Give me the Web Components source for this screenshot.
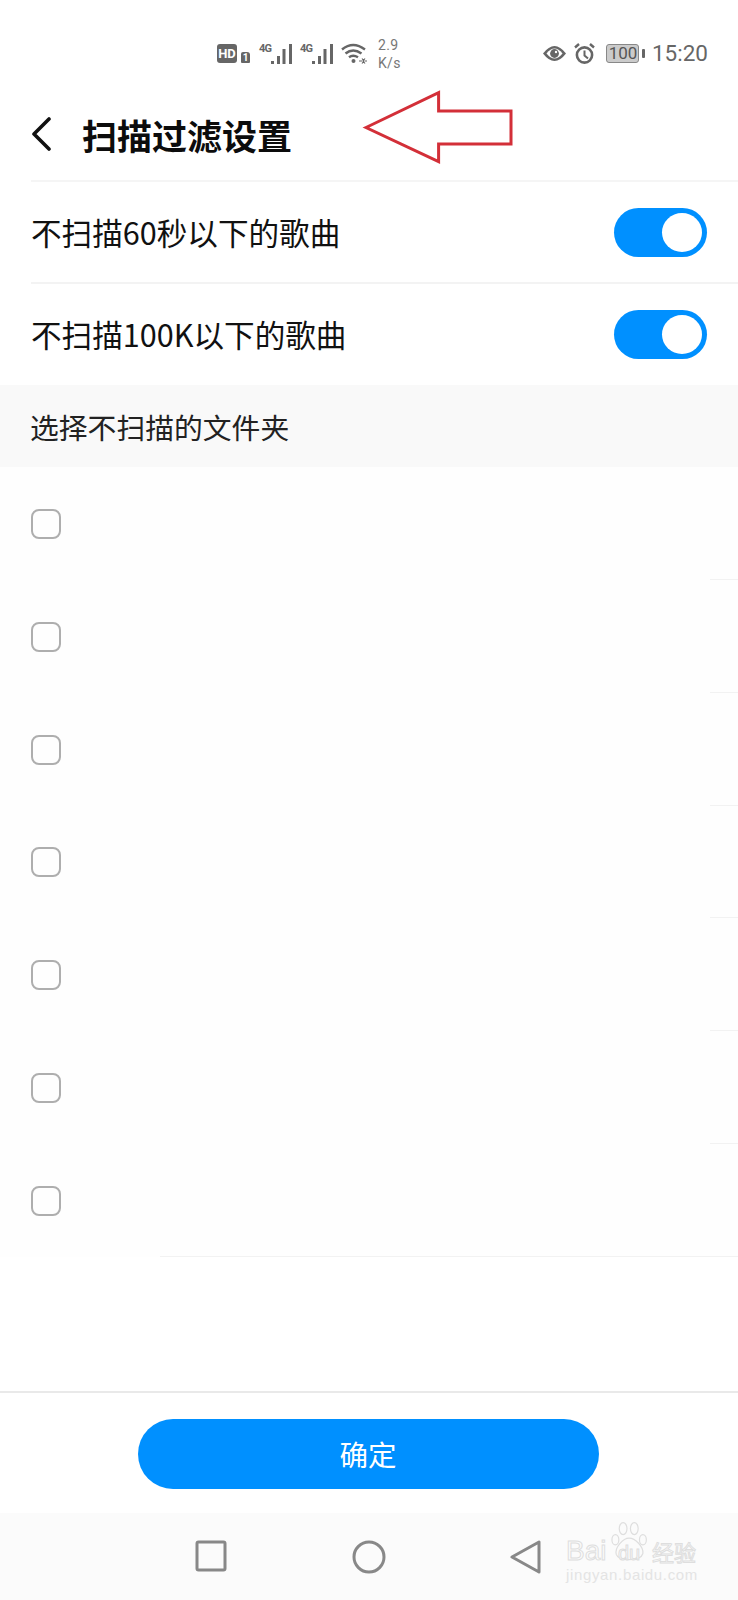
<!DOCTYPE html>
<html lang="zh">
<head>
<meta charset="utf-8">
<title>扫描过滤设置</title>
<style>
  html, body { margin: 0; padding: 0; background: #fff; }
  body { font-family: "Noto Sans CJK SC", "Noto Sans", sans-serif; color: #111; }
</style>
</head>
<body>
<app-shell>
  <status-bar></status-bar>
  <title-bar>扫描过滤设置</title-bar>
  <switch-row divider>不扫描60秒以下的歌曲</switch-row>
  <switch-row>不扫描100K以下的歌曲</switch-row>
  <section-label>选择不扫描的文件夹</section-label>
  <folder-row inset="710"></folder-row>
  <folder-row inset="710"></folder-row>
  <folder-row inset="710"></folder-row>
  <folder-row inset="710"></folder-row>
  <folder-row inset="710"></folder-row>
  <folder-row inset="710"></folder-row>
  <folder-row inset="160"></folder-row>
  <action-footer>确定</action-footer>
  <nav-bar></nav-bar>
  <red-arrow></red-arrow>
  <baidu-mark></baidu-mark>
</app-shell>

<script>
'use strict'

function define(name, html) {
  customElements.define(name, class extends HTMLElement {
    constructor() {
      super();
      this.attachShadow({ mode: 'open' });
      this.shadowRoot.innerHTML = html;
    }
  });
}

define('app-shell', `
<style>
  :host { display: flex; flex-direction: column; position: relative; width: 738px; height: 1600px; overflow: hidden; background: #fff; }
</style>
<slot></slot>`);

const bars = `
<svg width="22" height="20" viewBox="0 0 22 20" fill="#666">
  <rect x="0" y="17" width="3" height="3"/><rect x="6" y="12" width="3" height="8"/>
  <rect x="11.5" y="5" width="3" height="15"/><rect x="18" y="0" width="3" height="20"/>
</svg>`;

define('status-bar', `
<style>
  :host { display: block; height: 92px; box-sizing: border-box; padding: 38px 30px 0 217px; color: #666; font-family: "Roboto", sans-serif; }
  .row { display: flex; align-items: center; height: 31px; }
  .hd { width: 20px; height: 19px; border-radius: 3px; background: #666; color: #fff; font: 700 13px/19px "Roboto", sans-serif; text-align: center; }
  .sim { width: 9px; height: 11px; margin: 8px 0 0 4px; border-radius: 2px 3px 1px 1px; background: #666; color: #fff; font: 700 10px/11px "Roboto", sans-serif; text-align: center; }
  .sig { display: flex; align-items: flex-start; height: 20px; }
  .sig b { font: 700 11px/9px "Roboto", sans-serif; width: 12px; letter-spacing: -.7px; }
  .speed { width: 24px; margin-left: 11px; font-size: 14px; line-height: 18px; color: #777; letter-spacing: .3px; }
  .right { display: flex; align-items: center; margin-left: auto; }
  .batt { width: 31px; height: 17px; border: 1px solid #888; border-radius: 3px; background: #cbcbcb; color: #555; font-size: 17px; line-height: 17px; text-align: center; margin-left: 11px; }
  .nub { width: 2.5px; height: 9px; margin-left: 3px; border-radius: 1px; background: #666; }
  .time { margin-left: 7px; font-size: 22.5px; line-height: 31px; color: #666; }
</style>
<div class="row">
  <div class="hd">HD</div><div class="sim">1</div>
  <div class="sig" style="margin-left:9px"><b>4G</b>${bars}</div>
  <div class="sig" style="margin-left:7px"><b>4G</b>${bars}</div>
  <svg style="margin-left:7px" width="26" height="21" viewBox="0 0 26 21" fill="none" stroke="#666" stroke-width="2.4">
    <path d="M1 6.5Q12 -2.5 24 6.5"/><path d="M4.5 10.5Q12 4.5 20.5 10.5"/><path d="M8 14.3Q12 11.3 17 14.3"/>
    <circle cx="12.5" cy="18" r="2" fill="#666" stroke="none"/>
    <path d="M18 18h3M24 18h2M21 15.5l2 2.5-2 2.5M24 15.5l-2 2.5 2 2.5" stroke-width="1.2"/>
  </svg>
  <div class="speed">2.9<br>K/s</div>
  <div class="right">
    <svg width="23" height="15" viewBox="0 0 23 15">
      <path d="M0 7.5Q11.5 -7.5 23 7.5Q11.5 22.5 0 7.5Z" fill="#666"/>
      <path d="M3.5 7.5Q11.5 -2.5 19.5 7.5Q11.5 17.5 3.5 7.5Z" fill="#fff"/>
      <circle cx="11.5" cy="7.5" r="4.4" fill="#666"/><circle cx="13" cy="6" r="1.2" fill="#fff"/>
    </svg>
    <svg style="margin-left:8px" width="21" height="21" viewBox="0 0 21 21" fill="none" stroke="#666">
      <circle cx="10.5" cy="12" r="7.6" stroke-width="2.6"/>
      <path d="M10.5 7.5v5l3.5 3" stroke-width="2"/>
      <path d="M1 4.5L5 1M20 4.5L16 1" stroke-width="2.4"/>
    </svg>
    <div class="batt">100</div><div class="nub"></div>
    <div class="time">15:20</div>
  </div>
</div>`);

define('title-bar', `
<style>
  :host { display: block; height: 90px; padding-left: 31px; }
  .in { display: flex; align-items: center; box-sizing: border-box; height: 90px; padding-bottom: 4px; border-bottom: 2px solid #f5f5f5; }
  svg { display: block; }
  .t { margin-left: 31px; font-size: 35px; font-weight: 700; color: #0c0c0c; line-height: 1; }
</style>
<div class="in">
  <svg width="20" height="36" viewBox="0 0 20 36" fill="none" stroke="#111" stroke-width="3.6" stroke-linecap="round" stroke-linejoin="round">
    <path d="M18 3L3 18L18 33"/>
  </svg>
  <div class="t"><slot></slot></div>
</div>`);

define('ui-switch', `
<style>
  :host { display: flex; align-items: center; justify-content: flex-end; box-sizing: border-box; width: 93px; height: 49px; padding-right: 5px; border-radius: 25px; background: #0090ff; }
  i { display: block; width: 40px; height: 39px; border-radius: 50%; background: #fff; }
</style>
<i></i>`);

define('switch-row', `
<style>
  :host { display: block; height: 101px; padding-left: 31px; }
  :host([divider]) { height: 102px; }
  .in { display: flex; align-items: center; box-sizing: border-box; height: 100%; padding-right: 31px; }
  :host([divider]) .in { border-bottom: 2px solid #f3f3f3; }
  .t { flex: 1; font-size: 30.6px; line-height: 1; color: #111; }
</style>
<div class="in"><div class="t"><slot></slot></div><ui-switch></ui-switch></div>`);

define('section-label', `
<style>
  :host { display: flex; align-items: center; box-sizing: border-box; height: 82px; padding: 1px 0 0 30px; background: #f9f9f9; font-size: 28.8px; color: #222; }
</style>
<slot></slot>`);

class FolderRow extends HTMLElement {
  constructor() {
    super();
    this.attachShadow({ mode: 'open' });
    this.shadowRoot.innerHTML = `
<style>
  :host { display: flex; flex-direction: column; height: 112.85px; background: #fefefe; }
  .in { flex: 1; display: flex; align-items: center; padding: 2px 0 0 31px; }
  i { display: block; box-sizing: border-box; width: 30px; height: 30px; border: 2px solid #aeaeae; border-radius: 8px; }
  .line { height: 1px; background: #f2f2f2; margin-left: ${this.getAttribute('inset') || 0}px; }
</style>
<div class="in"><i></i></div><div class="line"></div>`;
  }
}
customElements.define('folder-row', FolderRow);

define('action-footer', `
<style>
  :host { display: block; margin-top: auto; box-sizing: border-box; height: 122px; padding: 26px 2px 0 0; border-top: 2px solid #e9e9e9; background: #fff; }
  .btn { width: 461px; height: 70px; margin: 0 auto; border-radius: 35px; background: #0090ff; color: #fff; font-size: 28.5px; line-height: 70px; text-align: center; }
</style>
<div class="btn"><slot></slot></div>`);

define('nav-bar', `
<style>
  :host { display: flex; align-items: center; box-sizing: border-box; height: 87px; padding: 0 0 0 195px; gap: 124px; background: #fbfbfb; }
  svg { display: block; }
</style>
<svg width="33" height="33" viewBox="0 0 33 33" fill="none" stroke="#888" stroke-width="3" stroke-linejoin="round">
  <rect x="2" y="2" width="28" height="28" rx="1.5"/>
</svg>
<svg width="34" height="34" viewBox="0 0 34 34" fill="none" stroke="#888" stroke-width="3">
  <circle cx="17" cy="17" r="15"/>
</svg>
<svg width="32" height="34" viewBox="0 0 32 34" fill="none" stroke="#888" stroke-width="3" stroke-linejoin="round">
  <path d="M29 2V32L2 17Z"/>
</svg>`);

define('red-arrow', `
<style>
  :host { position: absolute; left: 360px; top: 88px; width: 156px; height: 78px; }
  svg { display: block; }
</style>
<svg width="156" height="78" viewBox="360 88 156 78" fill="none" stroke="#d32f38" stroke-width="3">
  <path d="M366 127.5L438.6 92.7V111H511V144H438.6V161.7Z"/>
</svg>`);

define('baidu-mark', `
<style>
  :host { position: absolute; left: 566px; top: 1516px; width: 134px; height: 74px; color: #fbfbfb; -webkit-text-stroke: 1px #dedede; font-family: "Liberation Sans", sans-serif; }
  svg { position: absolute; left: 44px; top: 4px; }
  span { position: absolute; white-space: nowrap; line-height: 1; }
  .a { left: 0; top: 21px; font-size: 28px; }
  .d { left: 52px; top: 27px; font-size: 20px; }
  .j { left: 86px; top: 24px; font-size: 22px; font-family: "Noto Sans CJK SC", sans-serif; }
  .u { left: 0; top: 51px; font-size: 15px; color: #e4e4e4; -webkit-text-stroke: 0; letter-spacing: .65px; }
</style>
<svg width="40" height="43" viewBox="0 0 46 50" fill="none" stroke="#dedede" stroke-width="1.4">
  <ellipse cx="6" cy="23" rx="4" ry="6"/><ellipse cx="15" cy="10" rx="4.5" ry="7"/>
  <ellipse cx="28" cy="10" rx="4.5" ry="7"/><ellipse cx="38" cy="23" rx="4" ry="6"/>
  <path d="M22 21C15 21 5 32 7 40C9 46 17 46 22 46C27 46 36 46 38 39C39 31 29 21 22 21Z"/>
</svg>
<span class="a">Bai</span><span class="d">du</span><span class="j">经验</span>
<span class="u">jingyan.baidu.com</span>`);
</script>
</body>
</html>
